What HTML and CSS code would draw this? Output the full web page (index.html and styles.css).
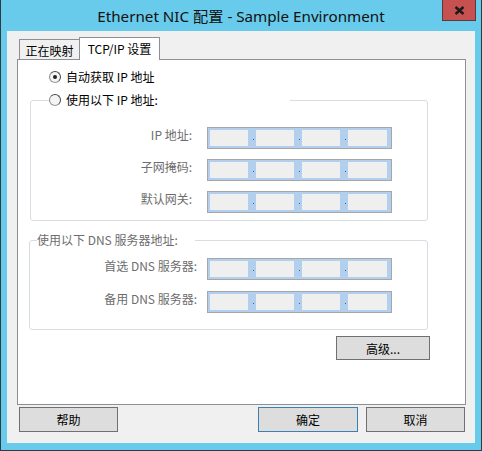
FILE: index.html
```html
<!DOCTYPE html>
<html lang="zh-CN">
<head>
	<meta charset="UTF-8">
	<title>Ethernet NIC 配置 - Sample Environment</title>
	<link rel="stylesheet" href="styles.css">
</head>
<body>
	<div class="window">
		<div class="titlebar">
			<span class="title">Ethernet NIC 配置 - Sample Environment</span>
			<button class="close" aria-label="关闭">
				<svg width="11" height="9" viewBox="0 0 11 9"><path d="M1.5 1 L9.5 8 M9.5 1 L1.5 8" stroke="#1a1a1a" stroke-width="2.4" fill="none"/></svg>
			</button>
		</div>
		<div class="client">
			<div class="tabs">
				<div class="tab">正在映射</div>
				<div class="tab active">TCP/IP 设置</div>
			</div>
			<div class="panel">
				<label class="radio-line first"><span class="radio checked"></span>自动获取 IP 地址</label>

				<fieldset class="group ip-group">
					<legend class="radio-line"><span class="radio"></span>使用以下 IP 地址:</legend>
					<div class="row">
						<span class="label">IP 地址:</span>
						<div class="ip"><span class="seg"></span><span class="sep"></span><span class="seg"></span><span class="sep"></span><span class="seg"></span><span class="sep"></span><span class="seg last"></span></div>
					</div>
					<div class="row">
						<span class="label">子网掩码:</span>
						<div class="ip"><span class="seg"></span><span class="sep"></span><span class="seg"></span><span class="sep"></span><span class="seg"></span><span class="sep"></span><span class="seg last"></span></div>
					</div>
					<div class="row">
						<span class="label">默认网关:</span>
						<div class="ip"><span class="seg"></span><span class="sep"></span><span class="seg"></span><span class="sep"></span><span class="seg"></span><span class="sep"></span><span class="seg last"></span></div>
					</div>
				</fieldset>

				<fieldset class="group dns-group">
					<legend class="disabled">使用以下 DNS 服务器地址:</legend>
					<div class="row">
						<span class="label">首选 DNS 服务器:</span>
						<div class="ip"><span class="seg"></span><span class="sep"></span><span class="seg"></span><span class="sep"></span><span class="seg"></span><span class="sep"></span><span class="seg last"></span></div>
					</div>
					<div class="row">
						<span class="label">备用 DNS 服务器:</span>
						<div class="ip"><span class="seg"></span><span class="sep"></span><span class="seg"></span><span class="sep"></span><span class="seg"></span><span class="sep"></span><span class="seg last"></span></div>
					</div>
				</fieldset>

				<div class="advanced-row">
					<button class="btn advanced">高级...</button>
				</div>
			</div>
			<div class="footer">
				<button class="btn help">帮助</button>
				<button class="btn ok">确定</button>
				<button class="btn cancel">取消</button>
			</div>
		</div>
	</div>
</body>
</html>
```
FILE: styles.css
```css
/* General styles */
* {
	box-sizing: border-box;
}
body {
	margin: 0;
	font-family: "Noto Sans CJK SC", "Noto Sans", sans-serif;
	font-size: 12px;
	color: #000;
	background: #68cbeb;
}
.window {
	position: relative;
	width: 482px;
	height: 451px;
	background: #68cbeb;
	border: 1px solid #2e3b40;
	border-top: none;
}
.titlebar {
	height: 31px;
	display: flex;
	align-items: center;
	justify-content: center;
}
.title {
	font-family: "Noto Sans", "Noto Sans CJK SC", sans-serif;
	font-size: 15.2px;
	color: #111;
	margin-top: -1px;
}
.close {
	position: absolute;
	top: 0;
	left: 441px;
	width: 34px;
	height: 21px;
	padding: 0;
	background: #c75050;
	border: 1px solid #5d3a3a;
	border-top: none;
	display: flex;
	align-items: center;
	justify-content: center;
}
.client {
	margin: 0 6px 0 6px;
	height: 412px;
	background: #f0f0f0;
	padding-top: 6px;
}

/* Tabs */
.tabs {
	display: flex;
	align-items: flex-end;
	height: 22px;
	padding-left: 12px;
	position: relative;
	z-index: 1;
}
.tab {
	height: 20px;
	width: 60px;
	border: 1px solid #8e8f94;
	border-right: none;
	border-bottom: none;
	background: #f0f0f0;
	display: flex;
	align-items: center;
	justify-content: center;
	padding-top: 1px;
}
.tab.active {
	height: 23px;
	width: 81px;
	border-right: 1px solid #8e8f94;
	background: #fff;
	margin-bottom: -1px;
	align-items: flex-start;
	padding-top: 2px;
}
.panel {
	margin-left: 10px;
	width: 449px;
	height: 346px;
	background: #fff;
	border: 1px solid #8e8f94;
	display: flex;
	flex-direction: column;
}

/* Radios */
.radio-line {
	display: flex;
	align-items: center;
	height: 16px;
	line-height: 16px;
}
.radio-line.first {
	margin: 9px 0 0 31px;
}
.radio {
	width: 12px;
	height: 12px;
	border: 1px solid #4a4a4a;
	border-bottom-color: #9a9a9a;
	border-left-color: #8a8a8a;
	border-radius: 50%;
	background: #f4f4f4;
	margin-right: 5px;
	display: flex;
	align-items: center;
	justify-content: center;
}
.radio.checked::after {
	content: "";
	width: 4px;
	height: 4px;
	border-radius: 50%;
	background: #222;
}

/* Group boxes */
.group {
	margin: 0;
	padding: 0;
	border: 1px solid #d8dde2;
	border-radius: 3px;
	min-width: 0;
}
.group legend {
	padding: 0;
	height: 16px;
	line-height: 16px;
}
.ip-group {
	margin: 7px 0 0 12px;
	width: 398px;
	padding-bottom: 7px;
}
.ip-group legend {
	margin-left: 18px;
	width: 241px;
}
.ip-group .row:first-of-type {
	margin-top: 19px;
}
.ip-group .row + .row {
	margin-top: 10px;
}
.ip-group .label {
	width: 161px;
	margin-right: 15px;
}
.dns-group {
	margin: 11px 0 0 11px;
	width: 399px;
	padding-bottom: 16px;
}
.dns-group legend {
	margin-left: 7px;
	width: 158px;
}
.dns-group .row:first-of-type {
	margin-top: 10px;
}
.dns-group .row + .row {
	margin-top: 11px;
}
.dns-group .label {
	width: 167px;
	margin-right: 10px;
}
.disabled,
.label {
	color: #6d6d6d;
}

/* Address fields */
.row {
	display: flex;
	align-items: flex-start;
}
.label {
	text-align: right;
	line-height: 16px;
	white-space: nowrap;
}
.ip {
	display: flex;
	width: 185px;
	height: 22px;
	padding: 2px 4px 2px 2px;
	border: 1px solid #a6a6a6;
	background: #b3cfee;
}
.seg {
	width: 38px;
	background: #efefef;
}
.seg.last {
	width: 39px;
}
.sep {
	width: 8px;
	position: relative;
}
.sep::after {
	content: "";
	position: absolute;
	left: 5px;
	top: 9px;
	width: 1px;
	height: 1px;
	background: #4d5a66;
}

/* Buttons */
.btn {
	font-family: "Noto Sans CJK SC", sans-serif;
	font-size: 12px;
	color: #000;
	background: #dddddd;
	border: 1px solid #707070;
	padding: 0;
	height: 25px;
	width: 99px;
}
.advanced-row {
	display: flex;
	justify-content: flex-end;
	margin: 6px 35px 0 0;
}
.advanced {
	width: 94px;
	height: 24px;
}
.footer {
	display: flex;
	margin: 2px 10px 0 12px;
}
.help {
	margin-right: auto;
}
.ok {
	width: 100px;
	border-color: #3c7fb1;
	margin-right: 8px;
}
```
